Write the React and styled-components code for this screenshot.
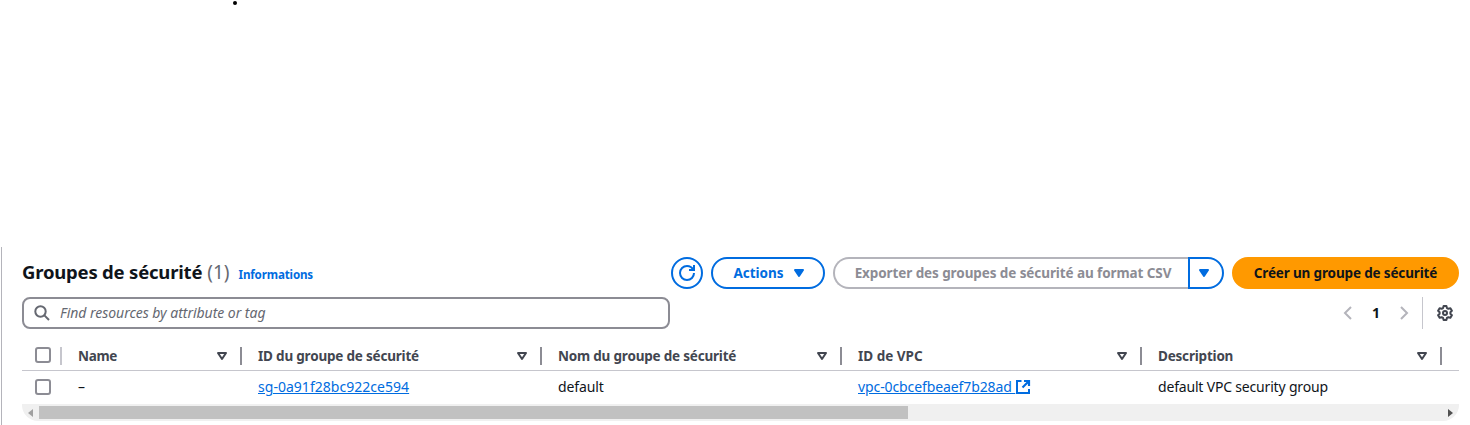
import React from "react";
import styled, { createGlobalStyle } from "styled-components";

const Global = createGlobalStyle`
  *, *::before, *::after { box-sizing: border-box; }
  html, body { margin: 0; background: #fff; overflow: hidden; }
  body { font-family: "Noto Sans", sans-serif; font-size: 14px; color: #0f141a; }
  button { font: inherit; padding: 0; margin: 0; background: none; border: 0; }
`;

const Page = styled.main`
  width: 1470px;
  height: 425px;
  display: flex;
  flex-direction: column;
  overflow: hidden;
`;
const Intro = styled.div`
  height: 247px;
  padding: 1px 0 0 233px;
`;
const Dot = styled.span`
  display: block;
  width: 4px;
  height: 4px;
  border-radius: 2px;
  background: #000;
`;
const Panel = styled.section`
  flex: 1;
  margin-left: 1px;
  border-left: 1px solid #b4b4bb;
  padding: 10px 11px 0 20px;
  display: flex;
  flex-direction: column;
`;
const HeaderRow = styled.header`
  height: 32px;
  display: flex;
  justify-content: space-between;
`;
const Heading = styled.div`
  display: flex;
  align-items: baseline;
  white-space: nowrap;
  line-height: 30px;
`;
const Label = styled.span`
  letter-spacing: ${(p) => p.$ls || 0}px;
  padding-bottom: ${(p) => p.$lift || 0}px;
  white-space: nowrap;
`;
const Title = styled.h2`
  margin: 0 5px 0 0;
  font-size: 18.5px;
  font-weight: 700;
`;
const Count = styled.span`
  font-size: 19px;
  color: #656871;
  margin-right: 9px;
`;
const Info = styled.a`
  font-size: 11.6px;
  font-weight: 700;
  color: #006ce0;
`;
const Actions = styled.div`
  display: flex;
  gap: 8px;
`;
const Button = styled.button`
  height: 32px;
  width: ${(p) => p.$w}px;
  display: flex;
  align-items: center;
  justify-content: center;
  gap: 8px;
  border: 2px solid ${(p) => (p.$primary ? "#ff9900" : "#006ce0")};
  border-radius: 20px;
  background: ${(p) => (p.$primary ? "#ff9900" : "#fff")};
  color: ${(p) => (p.$primary ? "#0f141a" : "#006ce0")};
  font-weight: 700;
  font-size: 13.5px;
`;
const ActionsButton = styled(Button)`
  padding-left: 4px;
  gap: 7px;
`;
const Split = styled.div`
  display: flex;
`;
const ExportButton = styled(Button)`
  border-color: #b4b4bb;
  color: #8c8c94;
  border-right: 0;
  border-radius: 20px 0 0 20px;
  padding-left: 3px;
`;
const MenuButton = styled(Button)`
  border-radius: 0 20px 20px 0;
  padding-right: 4px;
`;
const ToolRow = styled.div`
  height: 32px;
  margin-top: 8px;
  display: flex;
  justify-content: space-between;
`;
const Search = styled.div`
  width: 648px;
  border: 2px solid #8c8c94;
  border-radius: 8px;
  display: flex;
  align-items: center;
  gap: 10px;
  padding-left: 10px;
  color: #656871;
  font-style: italic;
`;
const Pager = styled.div`
  display: flex;
  align-items: center;
`;
const Arrow = styled.span`
  display: flex;
  color: #b4b4bb;
`;
const PageNumber = styled.span`
  width: 40px;
  padding-bottom: 2px;
  text-align: center;
  font-weight: 700;
`;
const Settings = styled.div`
  display: flex;
  align-items: center;
  height: 32px;
  margin-left: 10px;
  padding: 0 6px 0 14px;
  border-left: 1px solid #c6c6cd;
  color: #424650;
`;
const Table = styled.div`
  margin-top: 10px;
  display: flex;
  flex-direction: column;
`;
const TableRow = styled.div`
  height: ${(p) => (p.$head ? 32 : 33)}px;
  display: flex;
  align-items: center;
  overflow: hidden;
  padding-top: ${(p) => (p.$head ? 3 : 0)}px;
  border-bottom: ${(p) => (p.$head ? "1px solid #c6c6cd" : "0")};
`;
const CheckCell = styled.div`
  width: 40px;
  height: 18px;
  padding-left: 13px;
  display: flex;
  align-items: flex-start;
  border-right: ${(p) => (p.$head ? "2px solid #c6c6cd" : "2px solid transparent")};
`;
const Checkbox = styled.span`
  width: 16px;
  height: 16px;
  border: 2px solid #8c8c94;
  border-radius: 3px;
`;
const HeadCell = styled.div`
  flex: none;
  width: ${(p) => p.$w}px;
  height: 18px;
  padding: 0 10px 0 16px;
  display: flex;
  align-items: center;
  justify-content: space-between;
  border-right: 2px solid #8c8c94;
  color: #424650;
  font-weight: 700;
  font-size: 13.5px;
`;
const Cell = styled.div`
  flex: none;
  width: ${(p) => p.$w}px;
  padding: 0 0 2px 16px;
  display: flex;
  align-items: center;
  color: ${(p) => (p.$link ? "#006ce0" : "#0f141a")};
`;
const Link = styled.a`
  text-decoration: underline;
  text-underline-offset: 1px;
  white-space: pre;
  letter-spacing: ${(p) => p.$ls || 0}px;
`;
const Scrollbar = styled.div`
  height: 17px;
  display: flex;
  align-items: center;
  background: #f0f0f0;
  border-radius: 0 0 16px 16px;
`;
const ScrollArrow = styled.span`
  width: 17px;
  display: flex;
  justify-content: center;
  color: ${(p) => (p.$dim ? "#a0a0a0" : "#505050")};
`;
const Track = styled.div`
  flex: 1;
`;
const Thumb = styled.div`
  width: 869px;
  height: 13px;
  background: #c1c1c1;
`;

const Icon = ({ children }) => (
  <svg width="16" height="16" viewBox="0 0 16 16" fill="none" stroke="currentColor" strokeWidth="2">
    {children}
  </svg>
);
const Caret = ({ filled }) => (
  <Icon>
    <path d="M4 5h8l-4 6-4-6z" fill={filled ? "currentColor" : "none"} strokeLinejoin="round" />
  </Icon>
);
const Refresh = () => (
  <Icon>
    <path d="M15 8c0 3.87-3.13 7-7 7s-7-3.13-7-7 3.13-7 7-7c2.79 0 5.2 1.63 6.33 4" />
    <path d="M10 5h5V0" />
    <path d="M11.5 5H15V2z" fill="currentColor" stroke="none" />
  </Icon>
);
const Magnifier = () => (
  <Icon>
    <circle cx="6.5" cy="6.5" r="5.2" />
    <path d="M10.4 10.4 15 15" />
  </Icon>
);
const External = () => (
  <Icon>
    <path d="M9 2h5v5M14 2 7.5 8.5" strokeWidth="2.2" />
    <path d="M6.5 2H2v12h12v-4" />
  </Icon>
);
const Gear = () => (
  <Icon>
    <path
      d="M6.6 1h2.8l.5 2 1.5.8 2-.6 1.5 2.5-1.5 1.5v1.6l1.5 1.5-1.5 2.5-2-.6-1.5.8-.5 2H6.6l-.5-2-1.5-.8-2 .6-1.5-2.5 1.5-1.5V7.2L1.1 5.700l1.5-2.500 2 .6L6.1 3z"
      strokeLinejoin="round"
    />
    <circle cx="8" cy="8" r="2" />
  </Icon>
);

const columns = [
  { label: "Name", w: 180, ls: -0.3 },
  { label: "ID du groupe de sécurité", w: 300, ls: -0.2 },
  { label: "Nom du groupe de sécurité", w: 300, ls: -0.2 },
  { label: "ID de VPC", w: 300, ls: 0 },
  { label: "Description", w: 300, ls: -0.2 },
];

export default function App() {
  return (
    <Page>
      <Global />
      <Intro><Dot /></Intro>
      <Panel>
        <HeaderRow>
          <Heading>
            <Title><Label $ls={-0.2}>Groupes de sécurité</Label></Title>
            <Count>(1)</Count>
            <Info><Label $ls={-0.15}>Informations</Label></Info>
          </Heading>
          <Actions>
            <Button $w={32}><Refresh /></Button>
            <ActionsButton $w={114}><Label $lift={1}>Actions</Label><Caret filled /></ActionsButton>
            <Split>
              <ExportButton $w={355}><Label $lift={1} $ls={-0.09}>Exporter des groupes de sécurité au format CSV</Label></ExportButton>
              <MenuButton $w={36}><Caret filled /></MenuButton>
            </Split>
            <Button $primary $w={227}><Label $lift={1} $ls={-0.15}>Créer un groupe de sécurité</Label></Button>
          </Actions>
        </HeaderRow>
        <ToolRow>
          <Search><Magnifier /><Label $lift={2} $ls={-0.03}>Find resources by attribute or tag</Label></Search>
          <Pager>
            <Arrow><Icon><path d="m11 2-6 6 6 6" /></Icon></Arrow>
            <PageNumber>1</PageNumber>
            <Arrow><Icon><path d="m5 2 6 6-6 6" /></Icon></Arrow>
            <Settings><Gear /></Settings>
          </Pager>
        </ToolRow>
        <Table>
          <TableRow $head>
            <CheckCell $head><Checkbox /></CheckCell>
            {columns.map((c) => (
              <HeadCell key={c.label} $w={c.w}><Label $ls={c.ls}>{c.label}</Label><Caret /></HeadCell>
            ))}
          </TableRow>
          <TableRow>
            <CheckCell><Checkbox /></CheckCell>
            <Cell $w={180}>–</Cell>
            <Cell $w={300} $link><Link $ls={0.03}>sg-0a91f28bc922ce594</Link></Cell>
            <Cell $w={300}><Label $ls={-0.1}>default</Label></Cell>
            <Cell $w={300} $link><Link $ls={-0.1}>vpc-0cbcefbeaef7b28ad </Link><External /></Cell>
            <Cell $w={300}><Label $ls={-0.18}>default VPC security group</Label></Cell>
          </TableRow>
          <Scrollbar>
            <ScrollArrow $dim><svg width="5" height="8"><path d="M5 0v8L0 4z" fill="currentColor" /></svg></ScrollArrow>
            <Track><Thumb /></Track>
            <ScrollArrow><svg width="5" height="8"><path d="M0 0v8l5-4z" fill="currentColor" /></svg></ScrollArrow>
          </Scrollbar>
        </Table>
      </Panel>
    </Page>
  );
}
